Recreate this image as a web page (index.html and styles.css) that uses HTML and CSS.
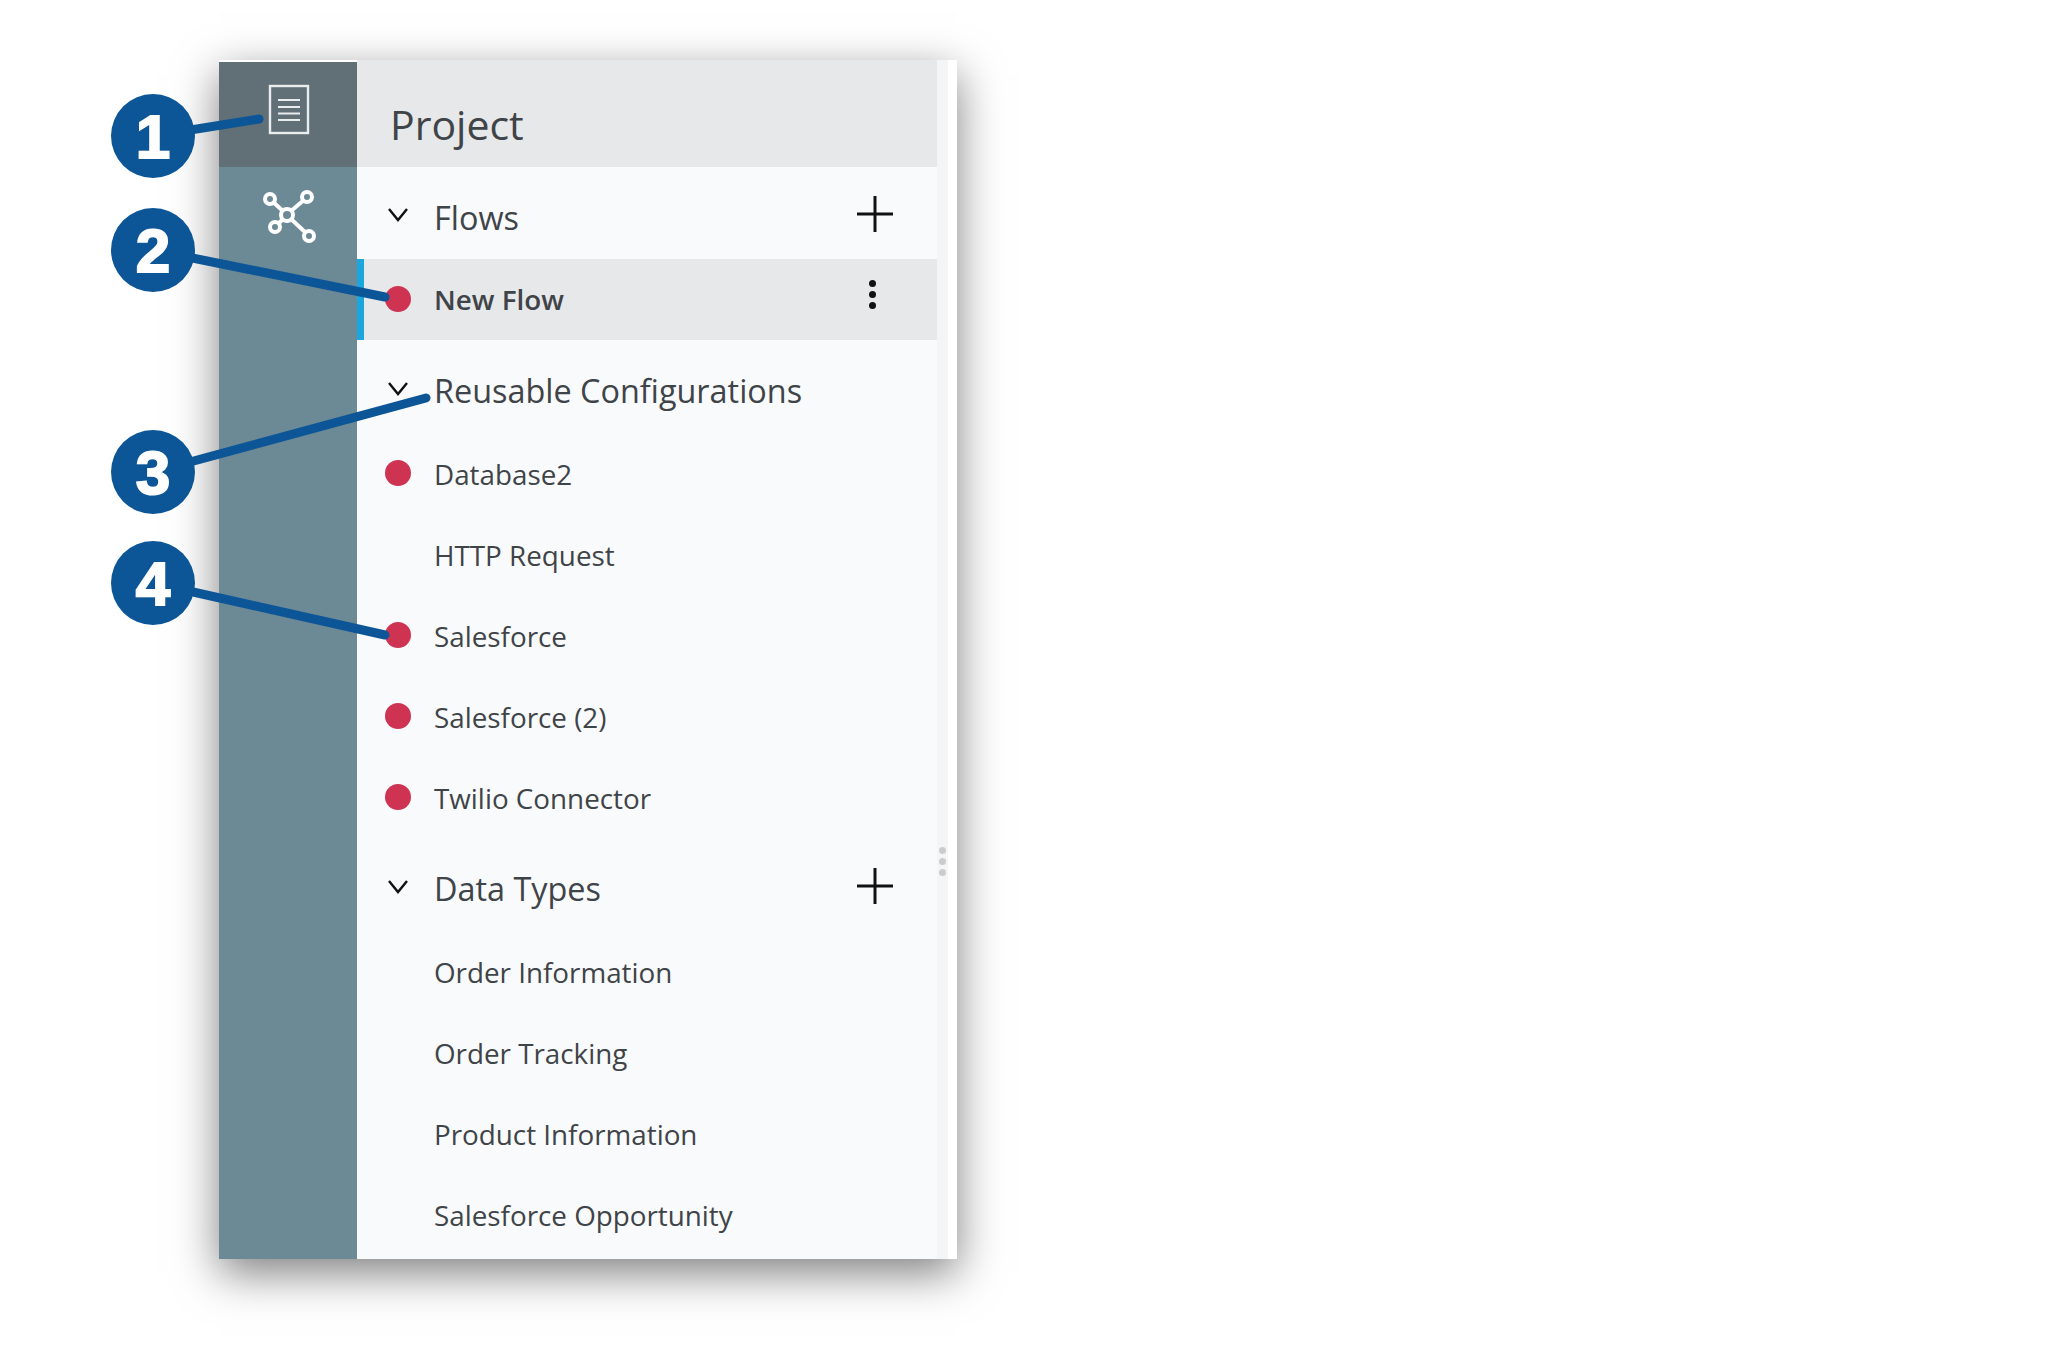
FILE: index.html
```html
<!DOCTYPE html>
<html lang="en">
<head>
    <meta charset="UTF-8">
    <title>Project</title>
    <link rel="stylesheet" href="styles.css">
</head>
<body>
    <div class="panel">
        <nav class="sidebar">
            <div class="tab tab-active">
                <svg width="42" height="51" viewBox="0 0 42 51" fill="none" stroke="#e9edee">
                    <rect x="2" y="2" width="38" height="47" stroke-width="2.4"/>
                    <path d="M10 16h22M10 23h22M10 29.500h22M10 36h22" stroke-width="2"/>
                </svg>
            </div>
            <div class="tab">
                <svg width="56" height="56" viewBox="0 0 56 56" fill="none" stroke="#fff" stroke-width="4">
                    <path d="M13 12L23 21M44 10L31 21M18 34L23 29M46 43L31 29"/>
                    <circle cx="10" cy="9" r="5"/>
                    <circle cx="47" cy="7" r="5"/>
                    <circle cx="15" cy="37" r="5"/>
                    <circle cx="49" cy="46" r="5"/>
                    <circle cx="27" cy="25" r="6"/>
                </svg>
            </div>
        </nav>
        <div class="main">
            <h1 class="title">Project</h1>
            <div class="content">
                <div class="tree">
                    <div class="group">
                        <svg class="chevron" width="20" height="14" viewBox="0 0 20 14"><path d="M1 1l9 11 9-11"/></svg>
                        <span class="group-name">Flows</span>
                        <svg class="plus" width="36" height="36" viewBox="0 0 36 36"><path d="M0 18h36M18 0v36"/></svg>
                    </div>
                    <div class="item item-active">
                        <span class="dot"></span>
                        <span class="item-name">New Flow</span>
                        <span class="kebab"><i></i><i></i><i></i></span>
                    </div>
                    <div class="group">
                        <svg class="chevron" width="20" height="14" viewBox="0 0 20 14"><path d="M1 1l9 11 9-11"/></svg>
                        <span class="group-name">Reusable Configurations</span>
                    </div>
                    <div class="item"><span class="dot"></span><span class="item-name">Database2</span></div>
                    <div class="item"><span class="dot dot-none"></span><span class="item-name">HTTP Request</span></div>
                    <div class="item"><span class="dot"></span><span class="item-name">Salesforce</span></div>
                    <div class="item"><span class="dot"></span><span class="item-name">Salesforce (2)</span></div>
                    <div class="item"><span class="dot"></span><span class="item-name">Twilio Connector</span></div>
                    <div class="group">
                        <svg class="chevron" width="20" height="14" viewBox="0 0 20 14"><path d="M1 1l9 11 9-11"/></svg>
                        <span class="group-name">Data Types</span>
                        <svg class="plus" width="36" height="36" viewBox="0 0 36 36"><path d="M0 18h36M18 0v36"/></svg>
                    </div>
                    <div class="item"><span class="dot dot-none"></span><span class="item-name">Order Information</span></div>
                    <div class="item"><span class="dot dot-none"></span><span class="item-name">Order Tracking</span></div>
                    <div class="item"><span class="dot dot-none"></span><span class="item-name">Product Information</span></div>
                    <div class="item"><span class="dot dot-none"></span><span class="item-name">Salesforce Opportunity</span></div>
                </div>
                <div class="scroll-strip"><span class="handle"><i></i><i></i><i></i></span></div>
            </div>
        </div>
    </div>

    <!-- callouts over the panel -->
    <svg class="callouts" width="2048" height="1372" viewBox="0 0 2048 1372">
        <g class="leaders">
            <path d="M153 136L259 119"/>
            <path d="M153 250L385 297"/>
            <path d="M153 472L426 398"/>
            <path d="M153 583L385 635"/>
        </g>
        <circle class="badge" cx="153" cy="136" r="42"/>
        <circle class="badge" cx="153" cy="250" r="42"/>
        <circle class="badge" cx="153" cy="472" r="42"/>
        <circle class="badge" cx="153" cy="583" r="42"/>
        <text class="badge-num" x="153" y="158">1</text>
        <text class="badge-num" x="153" y="272">2</text>
        <text class="badge-num" x="153" y="494">3</text>
        <text class="badge-num" x="153" y="605">4</text>
    </svg>
</body>
</html>
```

FILE: styles.css
```css
html, body { height: 100%; }
body { margin: 0; padding: 60px 0 0 219px; box-sizing: border-box; background: #fff; font-family: "Open Sans", "Liberation Sans", sans-serif; color: #3f4448; }

.panel { display: flex; width: 738px; height: 1199px; background: #fff; box-shadow: 0 14px 42px rgba(0, 0, 0, 0.5); }

.sidebar { width: 138px; margin-top: 2px; background: #6c8996; }
.tab { display: flex; justify-content: center; align-items: center; height: 105px; }
.tab-active { background: #616f77; }
.tab svg { display: block; }
.tab-active svg { margin-top: -11px; margin-left: 2px; }
.sidebar .tab:nth-child(2) svg { margin-top: -3px; }

.main { flex: 1; display: flex; flex-direction: column; min-width: 0; }
.title { height: 107px; margin: 0; padding: 0 0 0 33px; width: 547px; background: #e7e8ea; font-size: 41px; font-weight: 400; line-height: 128px; overflow: hidden; }

.content { flex: 1; display: flex; padding-right: 9px; }
.tree { width: 580px; background: #f9fafc; overflow: hidden; }
.scroll-strip { display: flex; justify-content: center; align-items: flex-start; width: 11px; margin-top: -107px; background: #f4f5f7; }
.handle { display: flex; flex-direction: column; gap: 4px; margin-top: 787px; }
.handle i { width: 7px; height: 7px; border-radius: 50%; background: #ccc; }

.group { display: flex; align-items: center; height: 92px; padding: 0 44px 0 31px; }
.item + .group { height: 93px; }
.chevron { flex: none; margin-right: 26px; margin-top: 4px; }
.chevron path { fill: none; stroke: #111; stroke-width: 2.4; }
.group-name { flex: 1; font-size: 32.400px; line-height: 92px; padding-top: 7px; white-space: nowrap; }
.plus { flex: none; margin-top: 2px; }
.plus path { fill: none; stroke: #111; stroke-width: 3; }

.item { display: flex; align-items: center; height: 81px; padding: 0 60px 0 28px; }
.dot { flex: none; width: 26px; height: 26px; margin-right: 23px; margin-top: -2px; border-radius: 50%; background: #cf3352; }
.dot-none { background: none; }
.item-name { flex: 1; font-size: 27.800px; padding-top: 1px; white-space: nowrap; }
.item-active { padding-left: 21px; border-left: 7px solid #1ba6dd; background: #e7e8ea; }
.item-active .item-name { font-weight: 600; margin-top: -2px; }
.kebab { display: flex; flex-direction: column; gap: 4px; margin-top: -10px; margin-right: 1px; }
.kebab i { width: 7px; height: 7px; border-radius: 50%; background: #111; }

.callouts { position: absolute; left: 0; top: 0; }
.leaders path { fill: none; stroke: #0c5596; stroke-width: 9; stroke-linecap: round; }
.badge { fill: #0c5596; }
.badge-num { fill: #fff; stroke: #fff; stroke-width: 2; font-family: "Liberation Sans", Arial, sans-serif; font-size: 62px; font-weight: 700; text-anchor: middle; }
```
